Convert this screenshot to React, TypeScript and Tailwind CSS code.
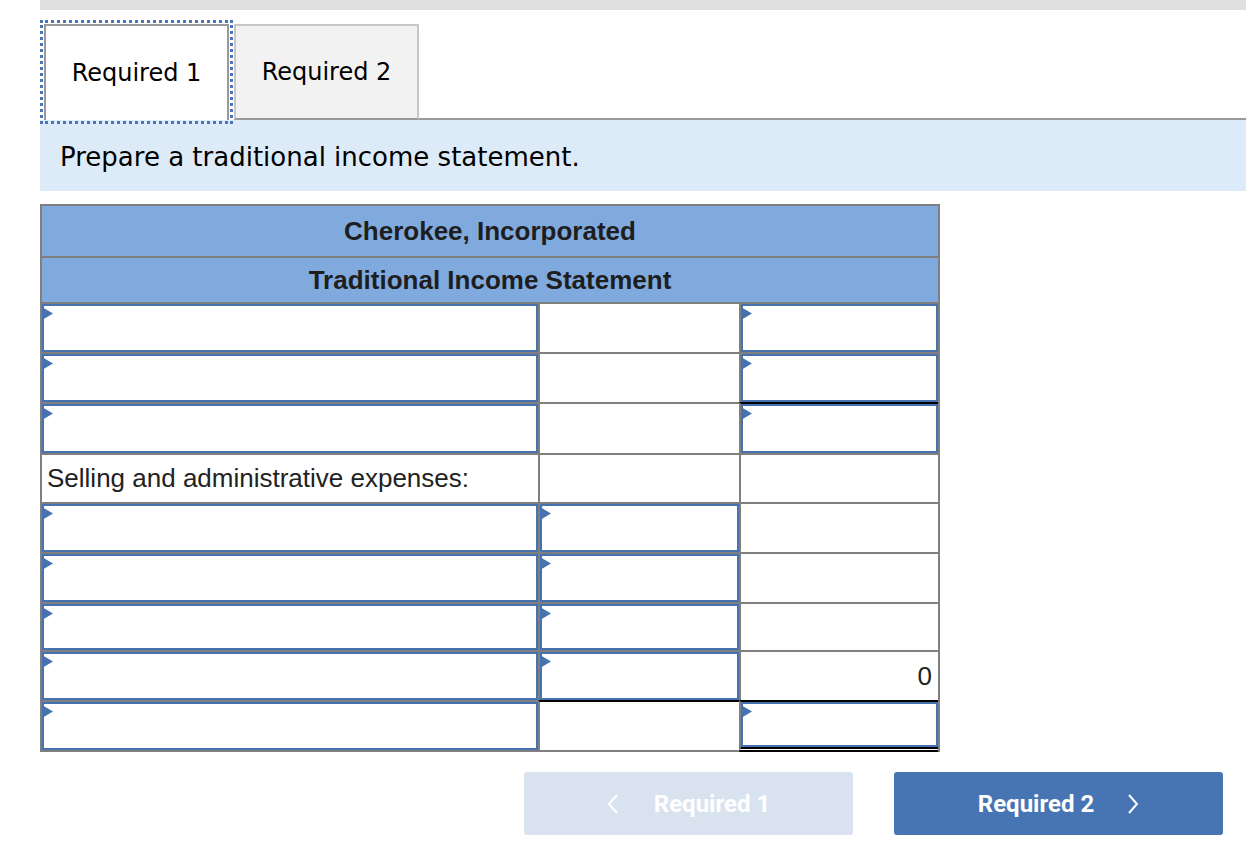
import React from "react";

type Cell =
  | { kind: "input"; top?: "black"; bottom?: "double" }
  | { kind: "empty"; top?: "black"; text?: string }
  | { kind: "label"; text: string };

const rows: { h: string; cells: Cell[] }[] = [
  { h: "h-[50px]", cells: [{ kind: "input" }, { kind: "empty" }, { kind: "input" }] },
  { h: "h-[50px]", cells: [{ kind: "input" }, { kind: "empty" }, { kind: "input" }] },
  { h: "h-[51px]", cells: [{ kind: "input" }, { kind: "empty" }, { kind: "input", top: "black" }] },
  {
    h: "h-[49px]",
    cells: [{ kind: "label", text: "Selling and administrative expenses:" }, { kind: "empty" }, { kind: "empty" }],
  },
  { h: "h-[50px]", cells: [{ kind: "input" }, { kind: "input" }, { kind: "empty" }] },
  { h: "h-[50px]", cells: [{ kind: "input" }, { kind: "input" }, { kind: "empty" }] },
  { h: "h-[48px]", cells: [{ kind: "input" }, { kind: "input" }, { kind: "empty" }] },
  { h: "h-[50px]", cells: [{ kind: "input" }, { kind: "input" }, { kind: "empty", text: "0" }] },
  {
    h: "h-[50px]",
    cells: [{ kind: "input" }, { kind: "empty", top: "black" }, { kind: "input", top: "black", bottom: "double" }],
  },
];

const widths = ["w-[496px]", "w-[201px] border-l-2", "w-[199px] border-l-2"];

function Flag() {
  return (
    <svg className="absolute left-[-2px] top-[1px]" width="11" height="13" viewBox="0 0 11 13">
      <polygon points="0,0 11,6.5 0,13" fill="#4672b0" />
    </svg>
  );
}

function BodyCell({ cell, col, last }: { cell: Cell; col: number; last: boolean }) {
  const top = "top" in cell && cell.top === "black" ? "border-t-black" : "border-t-[#7f7f7f]";
  const bottom =
    cell.kind === "input" && cell.bottom === "double"
      ? "border-b-[5px] border-double border-b-black"
      : last
        ? "border-b-2 border-b-[#7f7f7f]"
        : "";
  return (
    <div className={`${widths[col]} h-full border-t-2 ${top} ${bottom} border-l-[#7f7f7f] flex`}>
      {cell.kind === "input" && (
        <div className="relative flex-1 border-2 border-[#4672b0] bg-white">
          <Flag />
        </div>
      )}
      {cell.kind === "label" && (
        <div className="flex-1 flex items-center pl-[5px] text-[26px] text-[#222]">{cell.text}</div>
      )}
      {cell.kind === "empty" && (
        <div className="flex-1 flex items-center justify-end pr-[6px] text-[26px] text-[#222]">{cell.text}</div>
      )}
    </div>
  );
}

export default function App() {
  return (
    <div className="min-h-[868px] bg-white pl-[40px] overflow-hidden" style={{ fontFamily: '"DejaVu Sans", Verdana, sans-serif' }}>
      <div className="h-[10px] bg-[#e0e0e0]" />

      {/* tabs */}
      <div className="mt-[14px] flex items-end">
        <div className="ml-[4px] w-[185px] h-[96px] border-2 border-b-0 border-[#999] bg-white outline-[3px] outline-dotted outline-[#4a76b8] outline-offset-[1px] flex items-center justify-center text-[24px] text-black">
          Required 1
        </div>
        <div className="ml-[5px] w-[185px] h-[96px] border-2 border-[#c6c6c6] border-b-[#999] bg-[#f2f2f2] flex items-center justify-center text-[24px] text-black">
          Required 2
        </div>
        <div className="flex-1 border-b-2 border-[#999]" />
      </div>

      <div className="h-[71px] bg-[#ddebf8] flex items-center pl-[20px] pt-[3px] text-[26px] text-black">
        Prepare a traditional income statement.
      </div>

      {/* statement table */}
      <div
        className="mt-[13px] w-[900px] border-x-2 border-t-2 border-[#7f7f7f]"
        style={{ fontFamily: '"Liberation Sans", Arial, sans-serif' }}
      >
        <div className="h-[50px] bg-[#80aade] flex items-center justify-center text-[26px] font-bold text-[#1e1e1e]">
          Cherokee, Incorporated
        </div>
        <div className="h-[46px] border-t-2 border-[#7f7f7f] bg-[#80aade] flex items-center justify-center text-[26px] font-bold text-[#1e1e1e]">
          Traditional Income Statement
        </div>
        {rows.map((r, i) => (
          <div key={i} className={`flex ${i === rows.length - 1 ? "h-[52px]" : r.h}`}>
            {r.cells.map((c, j) => (
              <BodyCell key={j} cell={c} col={j} last={i === rows.length - 1} />
            ))}
          </div>
        ))}
      </div>

      {/* nav buttons */}
      <div
        className="mt-[20px] flex justify-end gap-[41px] pr-[23px]"
        style={{ fontFamily: "Roboto, Arial, sans-serif" }}
      >
        <button className="w-[329px] h-[63px] rounded-[3px] bg-[#d9e3ef] text-white text-[24px] font-bold flex items-center justify-center gap-[35px]">
          <svg width="12" height="20" viewBox="0 0 12 20">
            <polyline points="10,1 2,10 10,19" fill="none" stroke="white" strokeWidth="2" />
          </svg>
          <span>Required 1</span>
        </button>
        <button className="w-[329px] h-[63px] rounded-[3px] bg-[#4774b3] text-white text-[24px] font-bold flex items-center justify-center gap-[33px]">
          <span>Required 2</span>
          <svg width="12" height="20" viewBox="0 0 12 20">
            <polyline points="2,1 10,10 2,19" fill="none" stroke="white" strokeWidth="2" />
          </svg>
        </button>
      </div>
    </div>
  );
}
